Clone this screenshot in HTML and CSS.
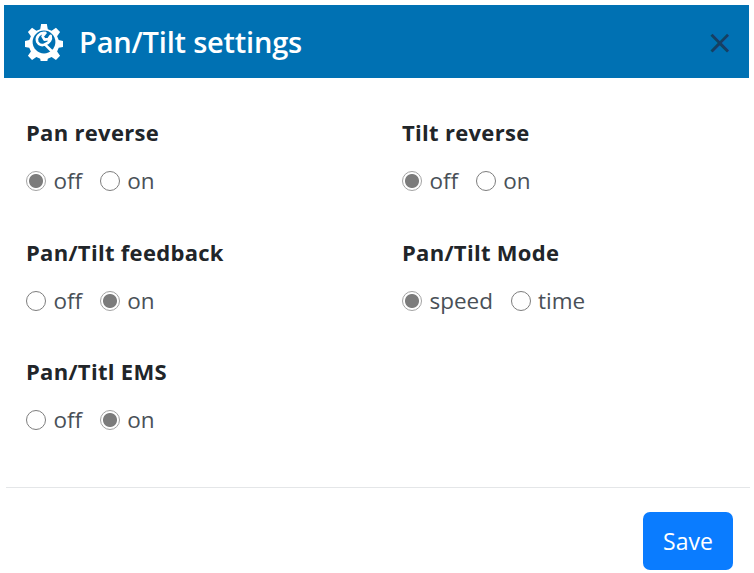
FILE: index.html
```html
<!DOCTYPE html>
<html lang="en">
<head>
    <meta charset="UTF-8">
    <meta name="viewport" content="width=device-width, initial-scale=1.0">
    <link rel="stylesheet" href="styles.css">
</head>
<body>
    <div class="modal">
        <div class="modal-header">
            <svg class="header-icon" viewBox="0 0 40 40">
                <path class="gear" d="M17 1h6l1 5.500 4 1.700 4.600-3.100 4.300 4.300-3.100 4.600 1.700 4 5.500 1v6l-5.500 1-1.700 4 3.100 4.600-4.300 4.300-4.600-3.100-4 1.700-1 5.500h-6l-1-5.500-4-1.700-4.600 3.100-4.300-4.300 3.100-4.600-1.700-4-5.500-1v-6l5.500-1 1.700-4-3.100-4.600 4.300-4.300 4.600 3.100 4-1.700z"/>
                <circle class="gear-hole" cx="20" cy="20" r="12"/>
                <path class="wrench" d="M21.500 10.500C15.500 9.500 11 15 13 20c1.500 3 5 4 8 2.500l7 7M21.500 10.500l-3 3.500 2 3.500 4-.5 2.500-3.500c1 3.500-1 7.500-6 9"/>
            </svg>
            <span class="modal-title">Pan/Tilt settings</span>
            <span class="close">&times;</span>
        </div>
        <div class="modal-body">
            <div class="field">
                <div class="field-label">Pan reverse</div>
                <div class="options">
                    <label class="option"><span class="radio checked"></span>off</label>
                    <label class="option"><span class="radio"></span>on</label>
                </div>
            </div>
            <div class="field">
                <div class="field-label">Tilt reverse</div>
                <div class="options">
                    <label class="option"><span class="radio checked"></span>off</label>
                    <label class="option"><span class="radio"></span>on</label>
                </div>
            </div>
            <div class="field">
                <div class="field-label">Pan/Tilt feedback</div>
                <div class="options">
                    <label class="option"><span class="radio"></span>off</label>
                    <label class="option"><span class="radio checked"></span>on</label>
                </div>
            </div>
            <div class="field">
                <div class="field-label">Pan/Tilt Mode</div>
                <div class="options">
                    <label class="option"><span class="radio checked"></span>speed</label>
                    <label class="option"><span class="radio"></span>time</label>
                </div>
            </div>
            <div class="field">
                <div class="field-label">Pan/Titl EMS</div>
                <div class="options">
                    <label class="option"><span class="radio"></span>off</label>
                    <label class="option"><span class="radio checked"></span>on</label>
                </div>
            </div>
        </div>
        <div class="modal-footer">
            <button class="save">Save</button>
        </div>
    </div>
</body>
</html>
```

FILE: styles.css
```css
body {
    margin: 0;
    background-color: #fff;
    font-family: "Open Sans", "Noto Sans", sans-serif;
    overflow: hidden;
}

.modal {
    padding: 5px 5px 0 4px;
}

.modal-header {
    display: flex;
    align-items: center;
    height: 73px;
    padding: 0 17px 0 21px;
    background-color: #0071b3;
    color: #fff;
}

.header-icon {
    width: 38px;
    height: 38px;
    margin-right: 16px;
}

.gear { fill: #fff; }
.gear-hole { fill: #0071b3; }

.wrench {
    fill: none;
    stroke: #fff;
    stroke-width: 2.800;
    stroke-linecap: round;
    stroke-linejoin: round;
}

.modal-title {
    flex: 1;
    font-size: 29px;
    font-weight: 600;
    letter-spacing: -0.2px;
}

.close {
    color: #173f63;
    font-size: 42px;
    font-weight: 400;
    line-height: 1;
}

.modal-body {
    display: grid;
    grid-template-columns: 376px 1fr;
    grid-auto-rows: 119.500px;
    height: 410px;
    box-sizing: border-box;
    padding: 39px 0 0 20px;
    border-bottom: 1px solid #e4e6e8;
    margin: 0 -1px 0 2px;
}

.field-label {
    color: #212529;
    font-size: 22px;
    font-weight: 700;
    line-height: 30px;
    letter-spacing: 0.3px;
}

.options {
    display: flex;
    gap: 17.500px;
    margin-top: 19px;
}

.option {
    display: flex;
    align-items: center;
    gap: 7.500px;
    color: #495057;
    font-size: 22.500px;
    line-height: 30px;
}

.radio {
    width: 20px;
    height: 20px;
    box-sizing: border-box;
    border: 1.500px solid #7d7d7d;
    border-radius: 50%;
    background-color: #fff;
}

.radio.checked {
    border-color: #a3a3a3;
    background: radial-gradient(circle, #7c7c7c 0, #7c7c7c 6.500px, #fff 7.500px);
}

.modal-footer {
    display: flex;
    justify-content: flex-end;
    padding: 24px 16px 0 0;
}

.save {
    width: 90px;
    height: 58px;
    border: 0;
    border-radius: 7px;
    background-color: #0a7cff;
    color: #fff;
    font-family: inherit;
    font-size: 23px;
}
```
